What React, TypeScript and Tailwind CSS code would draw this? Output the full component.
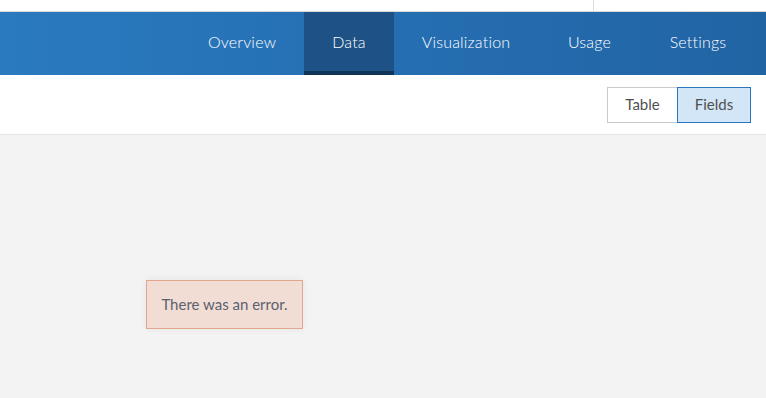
import React from "react";

export default function App() {
  const tabs = [
    { t: "Overview", w: "w-[124px]" },
    { t: "Data", w: "w-[90px]" },
    { t: "Visualization", w: "w-[144px]" },
    { t: "Usage", w: "w-[103px]" },
    { t: "Settings", w: "w-[114px]" },
  ];
  return (
    <div className="w-[766px] h-[398px] flex flex-col bg-[#f3f3f3] overflow-hidden" style={{ fontFamily: "Lato, 'Open Sans', sans-serif" }}>
      <div className="h-[12px] bg-white flex border-b border-[#d9d9d9] shrink-0">
        <div className="w-[594px] border-r border-[#dcdcdc]" />
      </div>
      <div className="h-[63px] shrink-0 flex justify-end pr-[11px] bg-gradient-to-r from-[#2a7ac0] to-[#2164a4] font-light">
        {tabs.map(({ t, w }) => (
          <div
            key={t}
            className={
              t === "Data"
                ? `${w} flex items-center justify-center text-[16px] text-white bg-[#1e5286] border-b-4 border-[#0f3458] pt-[1px] tracking-[0.2px]`
                : `${w} flex items-center justify-center text-[16px] text-white pb-[3px] tracking-[0.2px]`
            }
          >
            {t}
          </div>
        ))}
      </div>
      <div className="h-[60px] shrink-0 bg-white border-b border-[#e4e4e4] flex items-center justify-end pr-[15px]">
        <div className="flex h-[36px] text-[15px] text-[#505050]">
          <div className="w-[70px] flex items-center justify-center border border-[#cacaca] border-r-0 bg-white">Table</div>
          <div className="w-[74px] flex items-center justify-center border border-[#2b77bd] bg-[#d3e6f7]">Fields</div>
        </div>
      </div>
      <div className="flex-1 pt-[145px] pl-[146px]">
        <div className="w-[157px] h-[49px] flex items-center justify-center bg-[#f2ddd4] border border-[#e2a68c] text-[15px] text-[#5a6170] shadow-[0_0_8px_rgba(0,0,0,0.06)]">
          There was an error.
        </div>
      </div>
    </div>
  );
}
